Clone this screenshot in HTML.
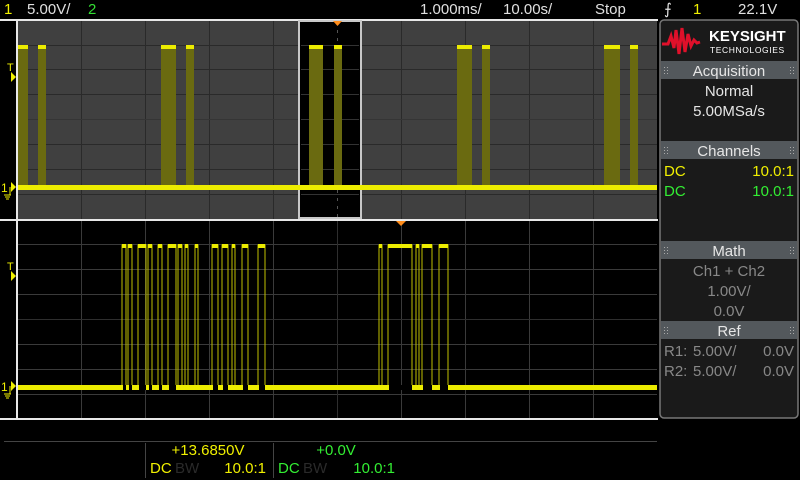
<!DOCTYPE html>
<html><head><meta charset="utf-8"><style>
html,body{margin:0;padding:0;background:#000;width:800px;height:480px;overflow:hidden}
svg{display:block}
text{font-family:"Liberation Sans",sans-serif}
</style></head><body>
<svg width="800" height="480" viewBox="0 0 800 480" xmlns="http://www.w3.org/2000/svg">
<defs>
<g id="dots" fill="#aaa"><rect x="0" y="0" width="1" height="1"/><rect x="3" y="0" width="1" height="1"/><rect x="0" y="3" width="1" height="1"/><rect x="3" y="3" width="1" height="1"/><rect x="0" y="6" width="1" height="1"/><rect x="3" y="6" width="1" height="1"/></g>
</defs>
<rect width="800" height="480" fill="#000"/>
<!-- top bar -->
<g font-size="15">
<text x="4" y="14" fill="#f0f000">1</text>
<text x="27" y="14" fill="#e0e0e0">5.00V/</text>
<text x="88" y="14" fill="#33dd33">2</text>
<text x="420" y="14" fill="#e0e0e0">1.000ms/</text>
<text x="503" y="14" fill="#e0e0e0">10.00s/</text>
<text x="595" y="14" fill="#e0e0e0">Stop</text>
<text x="664" y="14" fill="#e0e0e0">⨍</text>
<text x="693" y="14" fill="#f0f000">1</text>
<text x="738" y="14" fill="#e0e0e0">22.1V</text>
</g>
<rect x="0" y="19" width="658" height="2" fill="#e8e8e8"/>
<!-- upper plot -->
<rect x="17" y="21" width="640" height="198" fill="#404040"/>
<g stroke="#2a2a2a" stroke-width="1">
<path d="M81.5 21V219M145.5 21V219M209.5 21V219M273.5 21V219M337.5 21V219M401.5 21V219M465.5 21V219M529.5 21V219M593.5 21V219"/>
<path d="M17 45.5H657M17 69.5H657M17 94.5H657M17 144.5H657M17 169.5H657M17 194.5H657"/>
</g>
<path d="M17 119.5H657" stroke="#353535"/>
<!-- window -->
<rect x="299" y="21" width="62" height="197" fill="#000" stroke="#c8c8c8" stroke-width="2"/>
<g stroke="#333"><path d="M301 45.5H359M301 69.5H359M301 94.5H359M301 119.5H359M301 144.5H359M301 169.5H359M301 194.5H359"/></g>
<path d="M337.5 22V217" stroke="#555" stroke-dasharray="3,5"/>
<!-- upper bursts -->
<g fill="#6a6a10">
<rect x="17" y="48" width="11" height="140"/><rect x="38" y="48" width="8" height="140"/>
<rect x="161" y="48" width="15" height="140"/><rect x="186" y="48" width="8" height="140"/>
<rect x="309" y="48" width="14" height="140"/><rect x="334" y="48" width="8" height="140"/>
<rect x="457" y="48" width="15" height="140"/><rect x="482" y="48" width="8" height="140"/>
<rect x="604" y="48" width="16" height="140"/><rect x="630" y="48" width="8" height="140"/>
</g>
<g fill="#ecec00">
<rect x="17" y="45" width="11" height="4"/><rect x="38" y="45" width="8" height="4"/>
<rect x="161" y="45" width="15" height="4"/><rect x="186" y="45" width="8" height="4"/>
<rect x="309" y="45" width="14" height="4"/><rect x="334" y="45" width="8" height="4"/>
<rect x="457" y="45" width="15" height="4"/><rect x="482" y="45" width="8" height="4"/>
<rect x="604" y="45" width="16" height="4"/><rect x="630" y="45" width="8" height="4"/>
<rect x="17" y="185" width="640" height="5"/>
</g>
<polygon points="333,21 342,21 337.5,26" fill="#ff8c1a"/>
<rect x="16" y="21" width="2" height="198" fill="#e8e8e8"/>
<!-- lower plot -->
<rect x="0" y="219" width="658" height="2" fill="#e8e8e8"/>
<g stroke="#3a3a3a">
<path d="M81.5 221V418M145.5 221V418M209.5 221V418M273.5 221V418M401.5 221V418M465.5 221V418M529.5 221V418M593.5 221V418"/>
<path d="M17 244.5H657M17 269.5H657M17 294.5H657M17 344.5H657M17 369.5H657M17 394.5H657"/>
</g>
<path d="M17 319.5H657" stroke="#2e2e2e"/>
<path d="M337.5 221V418" stroke="#2e2e2e"/>
<polygon points="396,221 406,221 401,226" fill="#ff8c1a"/>
<path d="M17 388H122V245H126V388H128V245H132V388H138V245H146V388H148V245H152V388H158V245H162V388H168V245H176V388H178V245H182V388H185V245H188V388H195V245H198V388H212V245H218V388H222V245H228V388H232V245H235V388H242V245H248V388H258V245H265V388H379V245H382V388H388V245H412V388H416V245H419V388H422V245H432V388H439V245H448V388H657" fill="none" stroke="#c0c000" stroke-width="1"/>
<g fill="#ecec00">
<rect x="17" y="385" width="640" height="5"/>
<rect x="122" y="244" width="4" height="4"/><rect x="128" y="244" width="4" height="4"/><rect x="138" y="244" width="8" height="4"/><rect x="148" y="244" width="4" height="4"/><rect x="158" y="244" width="4" height="4"/><rect x="168" y="244" width="8" height="4"/><rect x="178" y="244" width="4" height="4"/><rect x="185" y="244" width="3" height="4"/><rect x="195" y="244" width="3" height="4"/><rect x="212" y="244" width="6" height="4"/><rect x="222" y="244" width="6" height="4"/><rect x="232" y="244" width="3" height="4"/><rect x="242" y="244" width="6" height="4"/><rect x="258" y="244" width="7" height="4"/><rect x="379" y="244" width="3" height="4"/><rect x="388" y="244" width="24" height="4"/><rect x="416" y="244" width="3" height="4"/><rect x="422" y="244" width="10" height="4"/><rect x="439" y="244" width="9" height="4"/>
</g>
<g fill="#000"><rect x="123" y="385" width="3" height="5"/><rect x="129" y="385" width="3" height="5"/><rect x="139" y="385" width="7" height="5"/><rect x="149" y="385" width="3" height="5"/><rect x="159" y="385" width="3" height="5"/><rect x="169" y="385" width="7" height="5"/><rect x="213" y="385" width="5" height="5"/><rect x="223" y="385" width="5" height="5"/><rect x="243" y="385" width="5" height="5"/><rect x="259" y="385" width="6" height="5"/><rect x="389" y="385" width="23" height="5"/><rect x="423" y="385" width="9" height="5"/><rect x="440" y="385" width="8" height="5"/></g>
<rect x="16" y="221" width="2" height="198" fill="#e8e8e8"/>
<rect x="0" y="418" width="658" height="2" fill="#e8e8e8"/>
<!-- left markers -->
<g fill="#f0f000" stroke="none">
<text x="7" y="71" font-size="11" fill="#f0f000">T</text>
<polygon points="11,72 16,77 11,82"/>
<text x="7" y="270" font-size="11" fill="#f0f000">T</text>
<polygon points="11,271 16,276 11,281"/>
<text x="1" y="192" font-size="12">1</text>
<polygon points="11,182 16,187 11,192"/>
<text x="1" y="391" font-size="12">1</text>
<polygon points="11,381 16,386 11,391"/>
</g>
<g stroke="#f0f000" fill="none"><path d="M10 187V195M4 195H11M5 197H10M6 199H9"/><path d="M10 386V394M4 394H11M5 396H10M6 398H9"/></g>
<!-- bottom info -->
<rect x="4" y="441" width="653" height="1" fill="#444"/>
<rect x="145" y="443" width="1" height="35" fill="#444"/>
<rect x="273" y="443" width="1" height="35" fill="#444"/>
<g font-size="15">
<text x="208" y="455" fill="#f0f000" text-anchor="middle">+13.6850V</text>
<text x="150" y="473" fill="#f0f000">DC</text>
<text x="175" y="473" fill="#2a2a2a">BW</text>
<text x="266" y="473" fill="#f0f000" text-anchor="end">10.0:1</text>
<text x="336" y="455" fill="#33ee33" text-anchor="middle">+0.0V</text>
<text x="278" y="473" fill="#33ee33">DC</text>
<text x="303" y="473" fill="#2a2a2a">BW</text>
<text x="395" y="473" fill="#33ee33" text-anchor="end">10.0:1</text>
</g>
<!-- right panel -->
<rect x="660" y="20" width="138" height="398" rx="4" fill="#1a1a1a" stroke="#777" stroke-width="1.5"/>
<path d="M662 44 L668 44 L671 36 L674 48 L676 30 L679 54 L682 28 L685 52 L688 34 L691 46 L694 40 L697 43 L700 42" fill="none" stroke="#e0102a" stroke-width="3"/>
<text x="709" y="41" font-size="15" font-weight="bold" fill="#fff">KEYSIGHT</text>
<text x="710" y="53" font-size="8.5" fill="#fff" letter-spacing="0.6">TECHNOLOGIES</text>
<g fill="#53585c">
<rect x="661" y="61" width="136" height="18"/>
<rect x="661" y="141" width="136" height="18"/>
<rect x="661" y="241" width="136" height="18"/>
<rect x="661" y="321" width="136" height="18"/>
</g>
<use href="#dots" x="664" y="67"/><use href="#dots" x="790" y="67"/>
<use href="#dots" x="664" y="147"/><use href="#dots" x="790" y="147"/>
<use href="#dots" x="664" y="247"/><use href="#dots" x="790" y="247"/>
<use href="#dots" x="664" y="327"/><use href="#dots" x="790" y="327"/>
<g font-size="15" text-anchor="middle" fill="#e6e6e6">
<text x="729" y="76">Acquisition</text>
<text x="729" y="96">Normal</text>
<text x="729" y="116">5.00MSa/s</text>
<text x="729" y="156">Channels</text>
<text x="729" y="256">Math</text>
<text x="729" y="336">Ref</text>
</g>
<g font-size="15" fill="#888" text-anchor="middle">
<text x="729" y="276">Ch1 + Ch2</text>
<text x="729" y="296">1.00V/</text>
<text x="729" y="316">0.0V</text>
</g>
<g font-size="15">
<text x="664" y="176" fill="#f0f000">DC</text>
<text x="794" y="176" fill="#f0f000" text-anchor="end">10.0:1</text>
<text x="664" y="196" fill="#33ee33">DC</text>
<text x="794" y="196" fill="#33ee33" text-anchor="end">10.0:1</text>
<text x="664" y="356" fill="#888">R1:</text><text x="693" y="356" fill="#888">5.00V/</text><text x="794" y="356" fill="#888" text-anchor="end">0.0V</text>
<text x="664" y="376" fill="#888">R2:</text><text x="693" y="376" fill="#888">5.00V/</text><text x="794" y="376" fill="#888" text-anchor="end">0.0V</text>
</g>
</svg>
</body></html>
